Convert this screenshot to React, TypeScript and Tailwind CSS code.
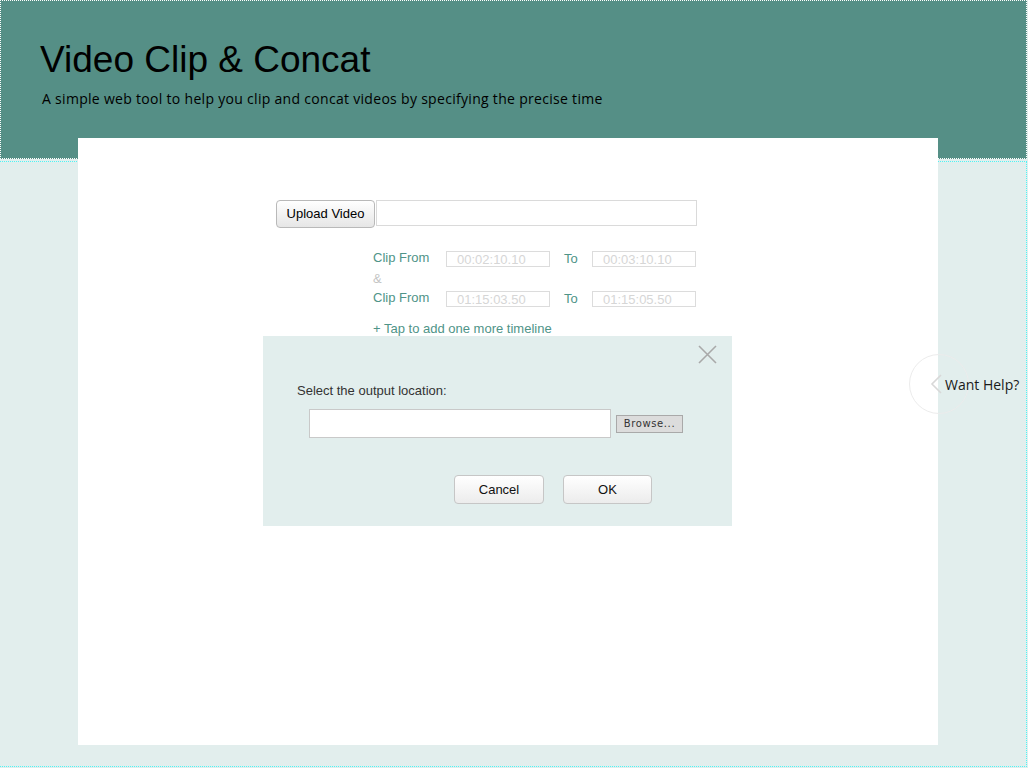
import React from "react";

const sans = { fontFamily: '"Liberation Sans", Arial, sans-serif' };

function TimeInput({ value }: { value: string }) {
  return (
    <div className="w-[104px] h-[16px] border border-[#dcdcdc] bg-white flex items-center pl-[10px] text-[13px] leading-none text-[#d6d6d6]" style={sans}>
      {value}
    </div>
  );
}

function ClipRow({ from, to }: { from: string; to: string }) {
  return (
    <div className="flex items-center h-[16px]">
      <span className="w-[73px] text-[13px] text-[#4f9488] -mt-[2px]">Clip From</span>
      <TimeInput value={from} />
      <span className="w-[42px] pl-[14px] text-[13px] text-[#4f9488]">To</span>
      <TimeInput value={to} />
    </div>
  );
}

export default function App() {
  return (
    <div className="w-[1028px] h-[768px] bg-[#e2eeed] relative overflow-hidden" style={sans}>
      <header className="w-[1027px] h-[159px] bg-[#558f86] border border-dotted border-white pt-[37px] pl-[39px]">
        <h1 className="text-[37px] leading-[44px] text-black" style={sans}>Video Clip &amp; Concat</h1>
        <p className="mt-[8px] ml-[2px] text-[14px] leading-[18px] tracking-[0.3px] text-black" style={{ fontFamily: '"Open Sans", sans-serif' }}>
          A simple web tool to help you clip and concat videos by specifying the precise time
        </p>
      </header>
      <main className="mt-[2px] w-[1027px] h-[606px] border-t border-r border-b border-dotted border-[#4ef5f5]">
        <div className="ml-[78px] -mt-[24px] w-[860px] h-[607px] bg-white relative pt-[62px] pl-[198px]">
          <div className="flex items-start">
            <button className="w-[99px] h-[28px] rounded-[4px] border border-[#b9b9b9] bg-gradient-to-b from-white to-[#e6e6e6] text-[13px] text-black" style={sans}>
              Upload Video
            </button>
            <div className="ml-[1px] w-[321px] h-[26px] border border-[#dadada] bg-white" />
          </div>
          <div className="ml-[97px] mt-[23px] flex flex-col">
            <ClipRow from="00:02:10.10" to="00:03:10.10" />
            <div className="h-[24px] flex items-center text-[13px] text-[#c4c4c4]">&amp;</div>
            <ClipRow from="01:15:03.50" to="01:15:05.50" />
            <div className="mt-[12px] text-[13px] text-[#4f9488]">+ Tap to add one more timeline</div>
          </div>

          <div className="absolute left-[185px] top-[198px] w-[469px] h-[190px] bg-[#e2eeed]">
            <svg className="absolute left-[435px] top-[9px]" width="19" height="19" viewBox="0 0 19 19">
              <path d="M1 1 L18 18 M18 1 L1 18" stroke="#a9a9a9" strokeWidth="1.6" fill="none" />
            </svg>
            <div className="absolute left-[34px] top-[45px] text-[13px] text-[#333]">Select the output location:</div>
            <div className="absolute left-[46px] top-[73px] flex items-center">
              <div className="w-[302px] h-[29px] bg-white border border-[#c9c9c9]" />
              <button className="ml-[5px] w-[67px] h-[18px] bg-[#dcdcdc] border border-[#a9a9a9] text-[10px] tracking-[0.6px] text-[#333]" style={{ fontFamily: '"DejaVu Sans", sans-serif' }}>
                Browse...
              </button>
            </div>
            <div className="absolute left-[191px] top-[139px] flex gap-[19px]">
              <button className="w-[90px] h-[29px] rounded-[4px] border border-[#c6c6c6] bg-gradient-to-b from-white to-[#ececec] text-[13px] text-[#111]" style={sans}>Cancel</button>
              <button className="w-[89px] h-[29px] rounded-[4px] border border-[#c6c6c6] bg-gradient-to-b from-white to-[#ececec] text-[13px] text-[#111]" style={sans}>OK</button>
            </div>
          </div>
        </div>
      </main>

      <div className="absolute left-[909px] top-[354px] w-[60px] h-[60px] rounded-full border border-[#ececec]" />
      <svg className="absolute left-[929px] top-[374px]" width="14" height="20" viewBox="0 0 14 20">
        <path d="M12 1 L3 10 L12 19" stroke="#d8d8d8" strokeWidth="1.6" fill="none" />
      </svg>
      <div className="absolute left-[945px] top-[375px] text-[14px] leading-[20px] text-[#1a1a1a]" style={{ fontFamily: '"Open Sans", sans-serif' }}>
        Want Help?
      </div>
    </div>
  );
}
